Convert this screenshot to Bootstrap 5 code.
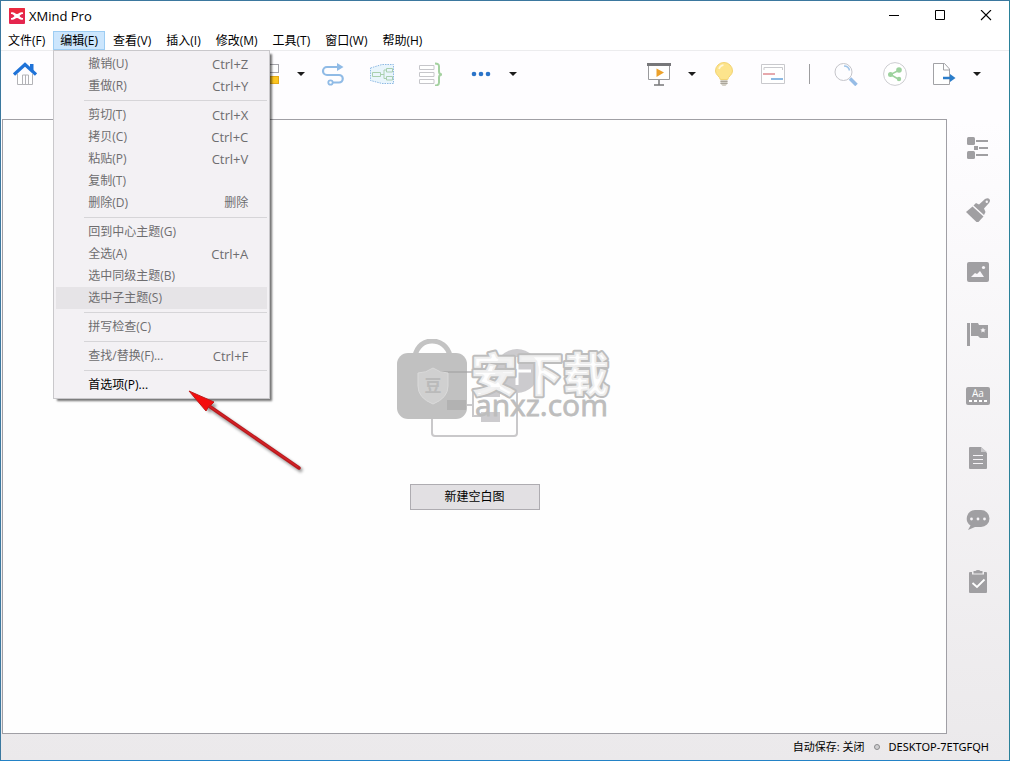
<!DOCTYPE html>
<html lang="zh-CN">
<head>
<meta charset="utf-8">
<meta name="viewport" content="width=device-width, initial-scale=1">
<title>XMind Pro</title>
<link href="https://cdn.jsdelivr.net/npm/bootstrap@5.3.0/dist/css/bootstrap.min.css" rel="stylesheet">
<style>
  body {
    font-family: "Open Sans", "Noto Sans CJK SC", sans-serif;
    font-size: 12px;
    line-height: 16px;
    color: #000;
    background: #fff;
  }
  button { font: inherit; color: inherit; background: none; border: 0; padding: 0; }
  svg { display: block; }
  .app-window {
    border: 1px solid #3b789f;
    border-right-color: #2a8199;
    border-bottom-color: #2382c6;
    background: linear-gradient(#fefdff 0, #fefdff 120px, #ebe9eb 100%);
  }
  .title-bar { height: 30px; background: #fff; padding: 0 17px 0 8px; }
  .title-text { font-size: 13px; line-height: 14px; }
  .window-controls { gap: 34px; }
  .menu-bar { height: 20px; background: #fff; border-bottom: 1px solid #ececee; }
  .menu-list { gap: 1px; }
  .menu-head { height: 19px; padding: 0 6px; border: 1px solid transparent; white-space: nowrap; }
  .menu-head.active { background: #cce6fd; border-color: #9dcdf3; }
  .edit-menu {
    top: 19px; left: 0; width: 217px; z-index: 10;
    padding: 2px;
    background: #f3f1f4;
    border: 1px solid #c9c8cb;
    box-shadow: 3px 3px 2px -1px rgba(0, 0, 0, .55);
  }
  .menu-entry { height: 22px; padding: 0 19px 0 32px; color: #6e6d6f; }
  .menu-entry.hovered { background: #e6e4e7; }
  .menu-entry.enabled { color: #000; }
  .menu-entry kbd { font: inherit; font-size: 13px; color: inherit; background: none; padding: 0; }
  .menu-entry kbd:lang(zh-Hans) { font-size: 12px; }
  .menu-line { height: 1px; margin: 3px 0 3px 28px; background: #d6d5d8; }
  .pointer-arrow { left: 130px; top: 352px; z-index: 11; pointer-events: none; }
  .tool-bar { height: 68px; padding: 11px 27px 0 12px; }
  .tool-set { gap: 25px; }
  .tool-left { margin-left: 219px; }
  .tool-pair { gap: 16px; margin-right: -10px; }
  .tool-right .tool-pair:last-child { margin-right: 0; }
  .tool-line { width: 1px; height: 20px; background: #9d9d9f; margin: 0 -1px; }
  .sheet { background: #fefefe; border: 1px solid #a09fa5; margin-left: 1px; }
  .hero { gap: 31px; }
  .btn-new { width: 130px; height: 26px; background: #e2e0e3; border: 1px solid #aeacb1; }
  .side-bar { width: 62px; padding-top: 17px; gap: 38px; }
  .status-bar { height: 26px; padding-right: 20px; gap: 9px; font-size: 11px; }
  .status-host { font-size: 12px; font-family: "Noto Sans", sans-serif; font-size: 11px; }
  .status-dot { width: 6px; height: 6px; border: 1px solid #8b8b8d; background: #cfced0; border-radius: 50%; }
</style>
</head>
<body>
<div class="app-window min-vh-100 d-flex flex-column">

  <header class="title-bar d-flex align-items-center justify-content-between">
    <div class="d-flex align-items-center">
      <svg width="16" height="16" viewBox="0 0 16 16" aria-hidden="true"><rect width="16" height="16" rx="1" fill="#e5264e"/><path d="M0 0h16v5L8 8 0 5z" fill="#ee2b35" opacity=".6"/><path d="M2 4.500C5 3.500 6 6 8 6s3-2.500 6-1.500V6c-2-.3-2.500 1-3.500 2 1 1 1.500 2.200 3.500 2v1.600C11 12.500 10 10 8 10s-3 2.500-6 1.600V10c2 .2 2.500-1 3.500-2C4.500 7 4 5.700 2 6z" fill="#fff"/></svg>
      <span class="title-text ms-1">XMind Pro</span>
    </div>
    <div class="window-controls d-flex">
      <button type="button" aria-label="最小化"><svg width="12" height="12"><path d="M1 5.500h10" stroke="#000"/></svg></button>
      <button type="button" aria-label="最大化"><svg width="12" height="12"><path d="M1.500 .5h9v9h-9z" fill="none" stroke="#000"/></svg></button>
      <button type="button" aria-label="关闭"><svg width="12" height="12"><path d="M1 0l10 10M11 0L1 10" stroke="#000" stroke-width="1.100"/></svg></button>
    </div>
  </header>

  <nav class="menu-bar">
    <ul class="menu-list list-unstyled d-flex mb-0">
      <li><button type="button" class="menu-head">文件(F)</button></li>
      <li class="position-relative">
        <button type="button" class="menu-head active" aria-haspopup="true" aria-expanded="true">编辑(E)</button>
        <div class="edit-menu position-absolute" role="menu">
          <button type="button" class="menu-entry w-100 d-flex justify-content-between align-items-center" role="menuitem"><span>撤销(U)</span><kbd>Ctrl+Z</kbd></button>
          <button type="button" class="menu-entry w-100 d-flex justify-content-between align-items-center" role="menuitem"><span>重做(R)</span><kbd>Ctrl+Y</kbd></button>
          <div class="menu-line" role="separator"></div>
          <button type="button" class="menu-entry w-100 d-flex justify-content-between align-items-center" role="menuitem"><span>剪切(T)</span><kbd>Ctrl+X</kbd></button>
          <button type="button" class="menu-entry w-100 d-flex justify-content-between align-items-center" role="menuitem"><span>拷贝(C)</span><kbd>Ctrl+C</kbd></button>
          <button type="button" class="menu-entry w-100 d-flex justify-content-between align-items-center" role="menuitem"><span>粘贴(P)</span><kbd>Ctrl+V</kbd></button>
          <button type="button" class="menu-entry w-100 d-flex justify-content-between align-items-center" role="menuitem"><span>复制(T)</span></button>
          <button type="button" class="menu-entry w-100 d-flex justify-content-between align-items-center" role="menuitem"><span>删除(D)</span><span>删除</span></button>
          <div class="menu-line" role="separator"></div>
          <button type="button" class="menu-entry w-100 d-flex justify-content-between align-items-center" role="menuitem"><span>回到中心主题(G)</span></button>
          <button type="button" class="menu-entry w-100 d-flex justify-content-between align-items-center" role="menuitem"><span>全选(A)</span><kbd>Ctrl+A</kbd></button>
          <button type="button" class="menu-entry w-100 d-flex justify-content-between align-items-center" role="menuitem"><span>选中同级主题(B)</span></button>
          <button type="button" class="menu-entry hovered w-100 d-flex justify-content-between align-items-center" role="menuitem"><span>选中子主题(S)</span></button>
          <div class="menu-line" role="separator"></div>
          <button type="button" class="menu-entry w-100 d-flex justify-content-between align-items-center" role="menuitem"><span>拼写检查(C)</span></button>
          <div class="menu-line" role="separator"></div>
          <button type="button" class="menu-entry w-100 d-flex justify-content-between align-items-center" role="menuitem"><span>查找/替换(F)...</span><kbd>Ctrl+F</kbd></button>
          <div class="menu-line" role="separator"></div>
          <button type="button" class="menu-entry enabled w-100 d-flex justify-content-between align-items-center" role="menuitem"><span>首选项(P)...</span></button>
        </div>
        <svg class="pointer-arrow position-absolute" width="130" height="100" viewBox="0 0 130 100" aria-hidden="true">
          <defs><filter id="soft" x="-20%" y="-20%" width="140%" height="140%"><feGaussianBlur stdDeviation="1.800"/></filter></defs>
          <g transform="translate(2 3)" filter="url(#soft)" opacity=".4"><path d="M28 24L117 85" stroke="#000" stroke-width="4"/><path d="M6 8l26 11-7 8z"/></g>
          <path d="M26 23L116 85" stroke="#b81a1e" stroke-width="3.500" stroke-linecap="round"/>
          <path d="M26 23L115 84" stroke="#d42226" stroke-width="1.500"/>
          <path d="M6 8l25 11-3 3-2 1-3 5z" fill="#f40d0d" stroke="#c21a1a"/>
        </svg>
      </li>
      <li><button type="button" class="menu-head">查看(V)</button></li>
      <li><button type="button" class="menu-head">插入(I)</button></li>
      <li><button type="button" class="menu-head">修改(M)</button></li>
      <li><button type="button" class="menu-head">工具(T)</button></li>
      <li><button type="button" class="menu-head">窗口(W)</button></li>
      <li><button type="button" class="menu-head">帮助(H)</button></li>
    </ul>
  </nav>

  <div class="tool-bar d-flex align-items-start">
    <button type="button" aria-label="主页"><svg width="24" height="24" viewBox="0 0 24 24"><path d="M4.500 12v10.500h15V12M9.500 22v-9h6v9M12.500 13v9" fill="#fff" stroke="#b3b3b7"/><path d="M1 12.500L12 2.500l11 10" fill="none" stroke="#1f73d8" stroke-width="3.200"/><path d="M17 2h3.500v7L17 6z" fill="#1f73d8"/></svg></button>
    <div class="tool-set tool-left d-flex">
      <div class="tool-pair d-flex align-items-center">
        <button type="button" aria-label="主题"><svg width="24" height="24" viewBox="0 0 24 24"><rect x=".5" y="2.500" width="22" height="8" fill="#fff" stroke="#a5a5ab"/><rect x=".5" y="14.500" width="22" height="7" fill="#fcc520" stroke="#e3a917"/></svg></button>
        <button type="button" aria-label="更多主题"><svg width="10" height="10"><path d="M1 3h8L5 7z" fill="#1c1c1c"/></svg></button>
      </div>
      <button type="button" aria-label="联系"><svg width="24" height="24" viewBox="0 0 24 24"><path d="M16 5H6a4 4 0 0 0 0 8h12a3.700 3.700 0 0 1 0 7.500h-7" fill="none" stroke="#90bbe6" stroke-width="2.200"/><path d="M16 1l6.500 4L16 9z" fill="#90bbe6"/><circle cx="9.500" cy="20.500" r="2.200" fill="#fff" stroke="#90bbe6" stroke-width="1.800"/></svg></button>
      <button type="button" aria-label="外框"><svg width="24" height="24" viewBox="0 0 24 24"><path d="M.5 6L12 2.500h11.500v19H12L.5 18.500z" fill="#e9f5fc" stroke="#8db9e4" stroke-dasharray="1.500 1"/><path d="M2.500 10.500h8v4h-8zM16.500 6.500h6v3.500h-6zM16.500 14.500h6V18h-6zM10.500 12.500h3.500M16.500 8H14v8.500h2.500" fill="none" stroke="#a9cfae"/></svg></button>
      <button type="button" aria-label="概要"><svg width="24" height="24" viewBox="0 0 24 24"><path d="M.5 3.500h14.500v4H.5zM.5 10.500h14.500v4H.5zM.5 17.500h14.500v4H.5z" fill="#fff" stroke="#c6c6ca"/><path d="M16 1.500c3 0 4 .5 4 3v5c0 2 .5 3 3 3-2.500 0-3 1-3 3v5c0 2-1 3-4 3" fill="none" stroke="#a4d1a0" stroke-width="2"/></svg></button>
      <div class="tool-pair d-flex align-items-center">
        <button type="button" aria-label="更多"><svg width="24" height="24" viewBox="0 0 24 24" fill="#2b74c9"><circle cx="6" cy="12" r="2.300"/><circle cx="13" cy="12" r="2.300"/><circle cx="20" cy="12" r="2.300"/></svg></button>
        <button type="button" aria-label="展开更多"><svg width="10" height="10"><path d="M1 3h8L5 7z" fill="#1c1c1c"/></svg></button>
      </div>
    </div>
    <div class="tool-set tool-right d-flex ms-auto">
      <div class="tool-pair d-flex align-items-center">
        <button type="button" aria-label="演示"><svg width="24" height="24" viewBox="0 0 24 24"><path d="M1.500 4v13.500h21V4" fill="#fff" stroke="#9a9a9d"/><path d="M0 1h24v3H0z" fill="#77777a"/><path d="M12 18v5M7 23h10" stroke="#77777a" stroke-width="1.500"/><path d="M9.500 6.500l7.500 4-7.500 4.500z" fill="#eca12b"/></svg></button>
        <button type="button" aria-label="演示选项"><svg width="10" height="10"><path d="M1 3h8L5 7z" fill="#1c1c1c"/></svg></button>
      </div>
      <button type="button" aria-label="头脑风暴"><svg width="24" height="24" viewBox="0 0 24 24"><path d="M12 .5a8.500 8.500 0 0 0-8.500 8.500c0 4 4.500 5.500 4.800 8.500h7.400c.3-3 4.800-4.500 4.800-8.500A8.500 8.500 0 0 0 12 .5z" fill="#fde48c" stroke="#f2d373"/><path d="M7 7c.5-2 2-3.500 4.500-4" fill="none" stroke="#fff8dc" stroke-width="1.500"/><path d="M8.500 18h7v3.500L13.500 24h-3l-2-2.500z" fill="#d4d0c6"/><path d="M8.500 19.500h7M8.500 21.500h7" stroke="#aaa59b"/></svg></button>
      <button type="button" aria-label="甘特图"><svg width="24" height="24" viewBox="0 0 24 24"><path d="M.5 2.500h23v19H.5z" fill="#fff" stroke="#c9c9cd"/><path d="M3 8V5.500h18.500V8" fill="none" stroke="#c9c9cd"/><path d="M2 12h12" stroke="#e7a8ac" stroke-width="2"/><path d="M10 17h12" stroke="#8cb9e3" stroke-width="2"/></svg></button>
      <div class="tool-line align-self-center"></div>
      <button type="button" aria-label="搜索"><svg width="24" height="24" viewBox="0 0 24 24"><circle cx="9.500" cy="10" r="8.500" fill="#fdfdff" stroke="#c5c5ca"/><path d="M10 4c3 0 5 2 5.500 4.500" fill="none" stroke="#9fc4e8" stroke-width="1.500"/><path d="M16 16.500l6.500 6.500" stroke="#96bce6" stroke-width="3.500"/></svg></button>
      <button type="button" aria-label="分享"><svg width="24" height="24" viewBox="0 0 24 24"><circle cx="12" cy="12" r="11.400" fill="#fff" stroke="#cdcdd1"/><path d="M16.500 8L7.500 12.500l8.500 5" fill="none" stroke="#9dd29e" stroke-width="1.500"/><g fill="#9dd29e"><circle cx="16" cy="8" r="2.800"/><circle cx="7.500" cy="12.500" r="2.500"/><circle cx="16" cy="17" r="2.200"/></g></svg></button>
      <div class="tool-pair d-flex align-items-center">
        <button type="button" aria-label="导出"><svg width="24" height="24" viewBox="0 0 24 24"><path d="M1.500 1.500h11l5 5.500v15.500h-16z" fill="#fff" stroke="#a2a2a6"/><path d="M11.500 1.500V8h6" fill="none" stroke="#a2a2a6"/><path d="M11 16h8" stroke="#2b7dca" stroke-width="2.500"/><path d="M18 12l5.500 4-5.500 4z" fill="#2b7dca"/></svg></button>
        <button type="button" aria-label="导出选项"><svg width="10" height="10"><path d="M1 3h8L5 7z" fill="#1c1c1c"/></svg></button>
      </div>
    </div>
  </div>

  <div class="d-flex flex-grow-1">
    <main class="sheet flex-grow-1 d-flex align-items-center justify-content-center">
      <div class="hero d-flex flex-column align-items-center pb-1">
        <svg width="276" height="114" viewBox="337 339 276 114">
          <g fill="none" stroke="#c9c8ca" stroke-width="2"><rect x="432" y="372" width="85" height="64" rx="3"/><path d="M467 405h6M481 392h-8v24h8"/></g>
          <circle cx="517" cy="371" r="22" fill="#cccbce"/>
          <path d="M517 357v28M503 371h28" stroke="#fff" stroke-width="3"/>
          <path d="M481 387h19v10h-19zM481 412h19v10h-19z" fill="#cccbce"/>
          <path d="M415 356c2-10 9-15 17-15s16 5 18 15" fill="none" stroke="#c3c3c3" stroke-width="5"/>
          <rect x="397" y="353" width="70" height="66" rx="11" fill="#c1c1c1"/>
          <path d="M432 403v-30q0-1 2-1h33" fill="none" stroke="#afafaf" stroke-width="2"/>
          <path d="M447 400h19v10h-19z" fill="#b2b2b2"/>
          <path d="M433 368q7 5 15 5v13q0 12-15 18-15-6-15-18v-13q8 0 15-5z" fill="#d0d0d0" stroke="#dadada"/>
          <text x="433" y="392" text-anchor="middle" font-family="Noto Sans CJK SC, sans-serif" font-size="17" font-weight="700" fill="#bababa">豆</text>
          <text x="471" y="391" font-family="Noto Sans CJK SC, sans-serif" font-size="46" font-weight="900" fill="#fff" fill-opacity=".75" stroke="#bdbdbd" stroke-width="4" stroke-linejoin="round" paint-order="stroke">安下载</text>
          <text x="475" y="416" font-family="Open Sans, sans-serif" font-size="30" fill="#bdbdbd" stroke="#bdbdbd" stroke-width=".8">anxz.com</text>
        </svg>
        <button type="button" class="btn-new">新建空白图</button>
      </div>
    </main>

    <aside class="side-bar d-flex flex-column align-items-center">
      <button type="button" aria-label="大纲"><svg width="24" height="24" viewBox="0 0 24 24" fill="#a09fa2"><rect x="1" y="1" width="8" height="8" rx="1.500"/><rect x="8" y="10" width="4" height="4"/><rect x="1" y="15" width="8" height="8" rx="1.500"/><path d="M10 4h12v2H10zM13 11h9v2h-9zM10 18h12v2H10z"/></svg></button>
      <button type="button" aria-label="格式"><svg width="24" height="24" viewBox="0 0 24 24"><path d="M0 14l6.500-5.500 11 10L11.500 25z" fill="#a09fa2"/><path d="M7.500 7.500L10 5l3 1.500L19 1c4-2.500 6.500 1 4 4l-5 5.500 1.500 3.500-1.500 3z" fill="#a09fa2"/><circle cx="20.800" cy="3.800" r="1.200" fill="#f8f6f9"/></svg></button>
      <button type="button" aria-label="图片"><svg width="24" height="24" viewBox="0 0 24 24"><rect x="1" y="2" width="22" height="20" rx="2" fill="#a09fa2"/><path d="M5 17l4-4 2 1 3-3 4 6z" fill="#f8f6f9"/><circle cx="17.500" cy="7.500" r="1.600" fill="#f8f6f9"/></svg></button>
      <button type="button" aria-label="图标"><svg width="24" height="24" viewBox="0 0 24 24"><path d="M1 1h3v23H1zM5 1h7l1 2h9v13h-8l-2-2H5z" fill="#a09fa2"/><path d="M17 5.500l.8 1.700 1.900.2-1.400 1.300.4 1.900-1.700-1-1.700 1 .4-1.900-1.400-1.300 1.900-.2z" fill="#f8f6f9"/></svg></button>
      <button type="button" aria-label="标签"><svg width="24" height="24" viewBox="0 0 24 24"><rect y="3" width="24" height="18" rx="2" fill="#a09fa2"/><text x="12" y="13" text-anchor="middle" font-size="10" fill="#fff">Aa</text><path d="M3 17h18" stroke="#fff" stroke-width="2" stroke-dasharray="3 2"/></svg></button>
      <button type="button" aria-label="备注"><svg width="24" height="24" viewBox="0 0 24 24"><path d="M3 2q0-1 1-1h11l6 6v15q0 1-1 1H4q-1 0-1-1z" fill="#a09fa2"/><path d="M15 1v5h6" fill="#c9c8cb"/><path d="M7 9.500h10M7 13.500h10M7 17.500h10" stroke="#f5f3f6"/></svg></button>
      <button type="button" aria-label="批注"><svg width="24" height="24" viewBox="0 0 24 24"><path d="M9 2h6a8.500 8.500 0 0 1 0 17H9l-7 3 2.500-4.500A8.500 8.500 0 0 1 9 2z" fill="#a09fa2"/><g fill="#f5f3f6"><circle cx="5.500" cy="11" r="1.400"/><circle cx="12" cy="11" r="1.400"/><circle cx="18.500" cy="11" r="1.400"/></g></svg></button>
      <button type="button" aria-label="任务"><svg width="24" height="24" viewBox="0 0 24 24" fill="#a09fa2"><path d="M4 2h2v2.500h12V2h2q1 0 1 1v19q0 1-1 1H4q-1 0-1-1V3q0-1 1-1z"/><path d="M7.500 1h2q.5-1 2.500-1t2.500 1h2v2.500h-9z"/><path d="M6.500 13l4.500 4 7.500-7.500" fill="none" stroke="#fff" stroke-width="1.800"/></svg></button>
    </aside>
  </div>

  <footer class="status-bar d-flex align-items-center justify-content-end">
    <span>自动保存: 关闭</span>
    <span class="status-dot"></span>
    <span class="status-host">DESKTOP-7ETGFQH</span>
  </footer>
</div>
<script src="https://cdn.jsdelivr.net/npm/bootstrap@5.3.0/dist/js/bootstrap.bundle.min.js"></script>
</body>
</html>
